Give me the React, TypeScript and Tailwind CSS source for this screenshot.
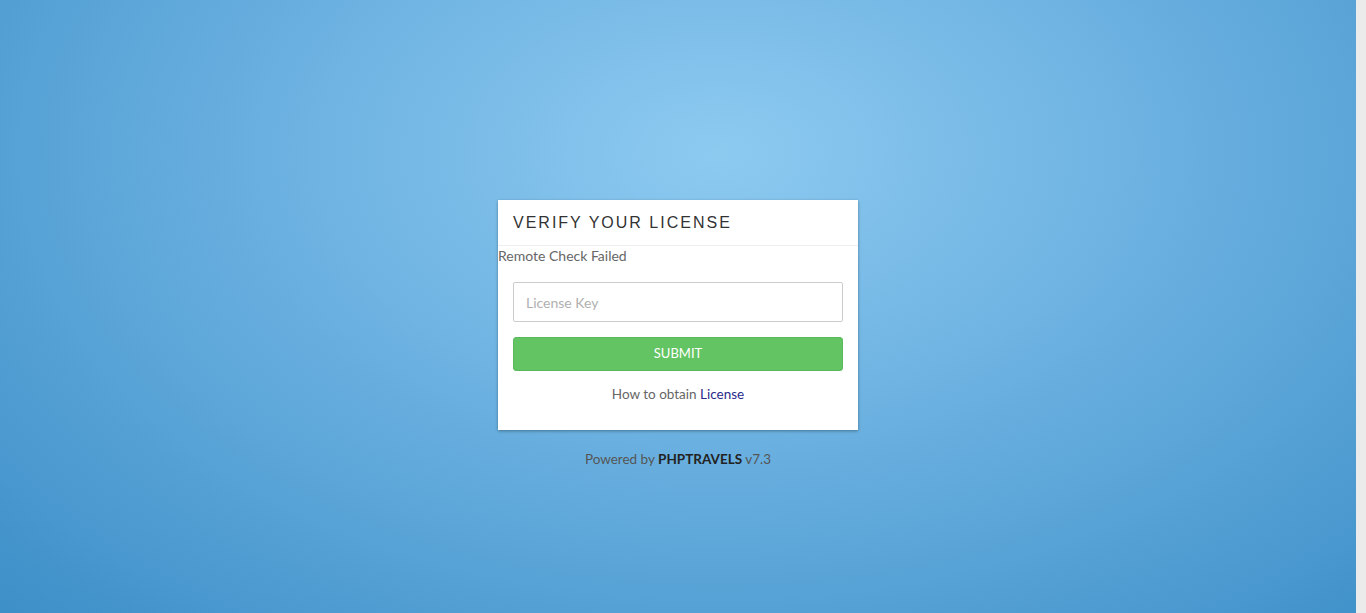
export default function App() {
  return (
    <div className="flex h-[613px] w-full overflow-hidden">
      <div className="flex h-full flex-1 flex-col items-center bg-[radial-gradient(ellipse_at_53%_25%,#8dcaf0_0%,#72b6e4_35%,#3d8fc8_100%)] pt-[200px] font-['Lato',sans-serif]">
        <div className="w-[360px] bg-white shadow-[0_1px_3px_rgba(0,0,0,0.35)]">
          <div className="flex h-[46px] items-center border-b border-[#eeeeee] px-[15px]">
            <h1 className="font-['Liberation_Sans',sans-serif] text-[16px] tracking-[2px] text-[#333]">
              VERIFY YOUR LICENSE
            </h1>
          </div>
          <p className="mt-[1px] text-[14px] leading-[18px] text-[#666]">Remote Check Failed</p>
          <div className="px-[15px] pb-[27px] pt-[17px]">
            <input
              type="text"
              placeholder="License Key"
              className="h-[40px] w-full rounded-[2px] border border-[#cccccc] px-[12px] text-[14px] text-[#555] outline-none placeholder:text-[#b0b0b0]"
            />
            <button className="mt-[15px] h-[34px] w-full rounded-[3px] border border-[#5cb85c] bg-[#63c463] text-[13px] text-white">
              SUBMIT
            </button>
            <p className="mt-[14px] text-center text-[13.5px] leading-[18px] text-[#666]">
              How to obtain <a className="text-[#2a2a8c]">License</a>
            </p>
          </div>
        </div>
        <p className="mt-[19px] text-[13.5px] leading-[20px] text-[#555]">
          Powered by <span className="font-bold text-[#222]">PHPTRAVELS</span> v7.3
        </p>
      </div>
      <div className="h-full w-[10px] bg-[#ebebeb]" />
    </div>
  );
}
